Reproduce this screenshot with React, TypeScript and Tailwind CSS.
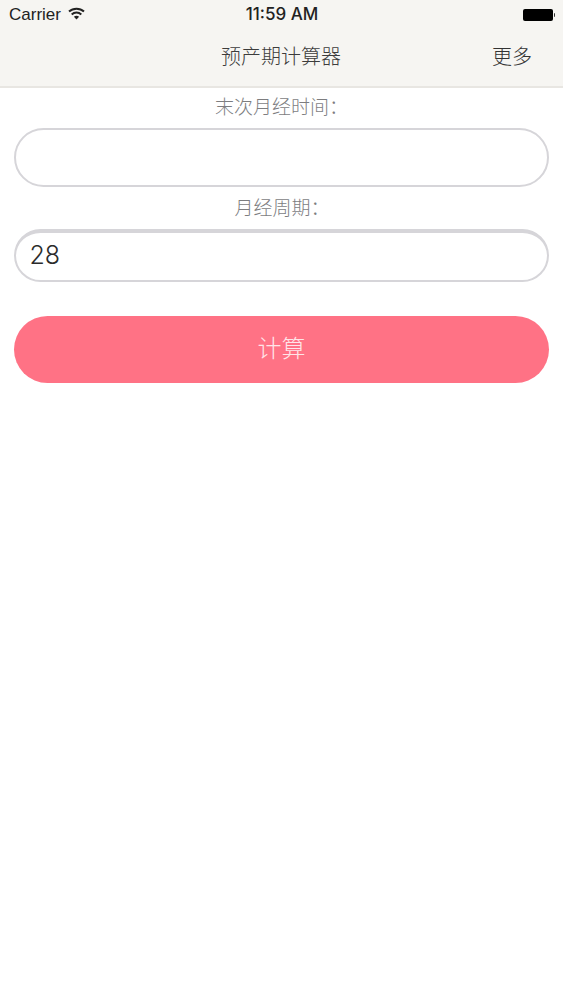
const cjk = "font-['Noto_Sans_CJK_SC','Noto_Sans',sans-serif] font-light";

function WifiIcon() {
  return (
    <svg width="17" height="13" viewBox="0 0 17 13" fill="none" stroke="#222" strokeWidth="2">
      <path d="M1 4.6C5.2 .7 11.8 .7 16 4.6" />
      <path d="M3.7 7.4C6.4 4.9 10.6 4.9 13.3 7.4" />
      <path d="M8.5 12.6 5.9 9.8C7.4 8.5 9.6 8.5 11.1 9.8Z" fill="#222" stroke="none" />
    </svg>
  );
}

function BatteryIcon() {
  return (
    <div className="flex items-center gap-px">
      <div className="h-[12px] w-[30px] rounded-[2px] bg-black" />
      <div className="h-[4px] w-[1.5px] rounded-r-sm bg-[#333]" />
    </div>
  );
}

export default function App() {
  return (
    <div className="flex min-h-[1000px] flex-col bg-white font-['Liberation_Sans',sans-serif]">
      {/* status bar + nav */}
      <div className="h-[88px] border-b-2 border-[#e8e6e2] bg-[#f6f5f2]">
        <div className="flex h-[29px] items-center justify-between pl-[9px] pr-[8px] text-[#222]">
          <div className="flex w-[150px] items-center gap-[7px]">
            <span className="text-[17px]">Carrier</span>
            <div className="-mt-[3px]">
              <WifiIcon />
            </div>
          </div>
          <span className="font-['Inter',sans-serif] text-[17px] font-medium">11:59 AM</span>
          <div className="flex w-[150px] justify-end">
            <BatteryIcon />
          </div>
        </div>
        <div className="flex h-[57px] items-center pr-[31px] pb-[4px]">
          <div className="w-[71px]" />
          <div className={`flex-1 text-center text-[20px] text-[#3c3c3c] ${cjk}`}>预产期计算器</div>
          <div className={`w-[41px] text-right text-[20px] whitespace-nowrap text-[#333] ${cjk}`}>更多</div>
        </div>
      </div>

      {/* form */}
      <div className="flex flex-col px-[14px]">
        <div className={`flex h-[40px] items-center justify-center pb-[4px] text-[19px] text-[#7d7d7f] ${cjk}`}>
          末次月经时间：
        </div>
        <div className="h-[59px] rounded-[30px] border-[2.5px] border-[#d6d5d9] bg-white" />
        <div className={`flex h-[42px] items-center justify-center pl-[1px] text-[19px] pb-[1px] text-[#7d7d7f] ${cjk}`}>
          月经周期：
        </div>
        <div className="flex h-[53px] items-center rounded-[27px] border-[2.5px] border-t-[4px] border-[#d6d5d9] bg-white pl-[13.5px] pb-[2px] font-['Inter',sans-serif] text-[25px] font-light text-[#2b2b2b]">
          28
        </div>
        <button className={`mt-[34px] h-[67px] rounded-[34px] bg-[#ff7285] pb-[5px] text-[24px] text-[#ffe4e8] ${cjk}`}>
          计算
        </button>
      </div>
    </div>
  );
}
